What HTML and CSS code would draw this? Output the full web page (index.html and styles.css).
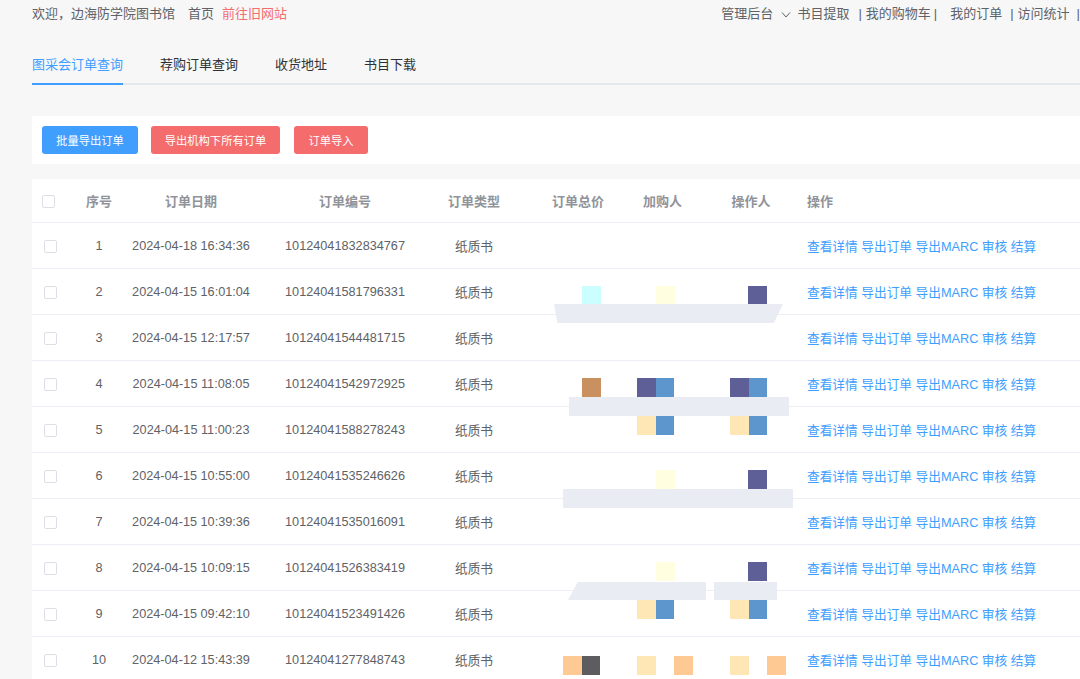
FILE: index.html
```html
<!DOCTYPE html>
<html lang="zh-CN">
<head>
<meta charset="utf-8">
<title>图采会订单查询</title>
<link rel="stylesheet" href="styles.css">
</head>
<body>
<div class="topbar">
  <div class="top-left">
    <span class="welcome">欢迎，边海防学院图书馆</span>
    <a class="home">首页</a>
    <a class="old">前往旧网站</a>
  </div>
  <div class="top-right">
    <span class="admin">管理后台</span>
    <svg class="chev" width="12" height="12" viewBox="0 0 12 12"><path d="M2 4.5 L6 9 L10 4.5" fill="none" stroke="#606266" stroke-width="1"/></svg>
    <span class="m5">书目提取</span>
    <span class="pipe m9">|</span>
    <span class="m4">我的购物车</span>
    <span class="pipe m3">|</span>
    <span class="m13">我的订单</span>
    <span class="pipe m8">|</span>
    <span class="m4">访问统计</span>
    <span class="pipe m7">|</span>
  </div>
</div>

<div class="tabs">
  <div class="tab active">图采会订单查询</div>
  <div class="tab">荐购订单查询</div>
  <div class="tab">收货地址</div>
  <div class="tab">书目下载</div>
</div>

<div class="toolbar">
  <button class="btn btn-blue w-batch">批量导出订单</button>
  <button class="btn btn-red w-all">导出机构下所有订单</button>
  <button class="btn btn-red w-import">订单导入</button>
</div>

<div class="table">
  <div class="row head">
    <div class="cell"><span class="cb cb-head"></span></div>
    <div class="cell">序号</div>
    <div class="cell">订单日期</div>
    <div class="cell">订单编号</div>
    <div class="cell">订单类型</div>
    <div class="cell"></div>
    <div class="cell">订单总价</div>
    <div class="cell">加购人</div>
    <div class="cell">操作人</div>
    <div class="cell ops">操作</div>
  </div>

  <div class="row">
    <div class="cell"><span class="cb"></span></div>
    <div class="cell">1</div>
    <div class="cell">2024-04-18 16:34:36</div>
    <div class="cell">10124041832834767</div>
    <div class="cell">纸质书</div>
    <div class="cell"></div>
    <div class="cell red"></div>
    <div class="cell red"></div>
    <div class="cell red"></div>
    <div class="cell ops"><a>查看详情</a> <a>导出订单</a> <a>导出MARC</a> <a>审核</a> <a>结算</a></div>
  </div>

  <div class="row">
    <div class="cell"><span class="cb"></span></div>
    <div class="cell">2</div>
    <div class="cell">2024-04-15 16:01:04</div>
    <div class="cell">10124041581796331</div>
    <div class="cell">纸质书</div>
    <div class="cell"></div>
    <div class="cell red o46"><i class="sq cyan"></i></div>
    <div class="cell red o36"><i class="sq lyel"></i></div>
    <div class="cell red o43"><i class="sq purple"></i></div>
    <div class="cell ops"><a>查看详情</a> <a>导出订单</a> <a>导出MARC</a> <a>审核</a> <a>结算</a></div>
  </div>

  <div class="row">
    <div class="cell"><span class="cb"></span></div>
    <div class="cell">3</div>
    <div class="cell">2024-04-15 12:17:57</div>
    <div class="cell">10124041544481715</div>
    <div class="cell">纸质书</div>
    <div class="cell"></div>
    <div class="cell red"></div>
    <div class="cell red"></div>
    <div class="cell red"></div>
    <div class="cell ops"><a>查看详情</a> <a>导出订单</a> <a>导出MARC</a> <a>审核</a> <a>结算</a></div>
  </div>

  <div class="row">
    <div class="cell"><span class="cb"></span></div>
    <div class="cell">4</div>
    <div class="cell">2024-04-15 11:08:05</div>
    <div class="cell">10124041542972925</div>
    <div class="cell">纸质书</div>
    <div class="cell"></div>
    <div class="cell red o46"><i class="sq brown"></i></div>
    <div class="cell red o17"><i class="sq purple"></i><i class="sq blue"></i></div>
    <div class="cell red o25"><i class="sq purple"></i><i class="sq blue"></i></div>
    <div class="cell ops"><a>查看详情</a> <a>导出订单</a> <a>导出MARC</a> <a>审核</a> <a>结算</a></div>
  </div>

  <div class="row">
    <div class="cell"><span class="cb"></span></div>
    <div class="cell">5</div>
    <div class="cell">2024-04-15 11:00:23</div>
    <div class="cell">10124041588278243</div>
    <div class="cell">纸质书</div>
    <div class="cell"></div>
    <div class="cell red hi"></div>
    <div class="cell red hi o17"><i class="sq pale"></i><i class="sq blue"></i></div>
    <div class="cell red hi o25"><i class="sq pale"></i><i class="sq blue"></i></div>
    <div class="cell ops"><a>查看详情</a> <a>导出订单</a> <a>导出MARC</a> <a>审核</a> <a>结算</a></div>
  </div>

  <div class="row">
    <div class="cell"><span class="cb"></span></div>
    <div class="cell">6</div>
    <div class="cell">2024-04-15 10:55:00</div>
    <div class="cell">10124041535246626</div>
    <div class="cell">纸质书</div>
    <div class="cell"></div>
    <div class="cell red"></div>
    <div class="cell red o36"><i class="sq lyel"></i></div>
    <div class="cell red o43"><i class="sq purple"></i></div>
    <div class="cell ops"><a>查看详情</a> <a>导出订单</a> <a>导出MARC</a> <a>审核</a> <a>结算</a></div>
  </div>

  <div class="row">
    <div class="cell"><span class="cb"></span></div>
    <div class="cell">7</div>
    <div class="cell">2024-04-15 10:39:36</div>
    <div class="cell">10124041535016091</div>
    <div class="cell">纸质书</div>
    <div class="cell"></div>
    <div class="cell red"></div>
    <div class="cell red"></div>
    <div class="cell red"></div>
    <div class="cell ops"><a>查看详情</a> <a>导出订单</a> <a>导出MARC</a> <a>审核</a> <a>结算</a></div>
  </div>

  <div class="row">
    <div class="cell"><span class="cb"></span></div>
    <div class="cell">8</div>
    <div class="cell">2024-04-15 10:09:15</div>
    <div class="cell">10124041526383419</div>
    <div class="cell">纸质书</div>
    <div class="cell"></div>
    <div class="cell red"></div>
    <div class="cell red o36"><i class="sq lyel"></i></div>
    <div class="cell red o43"><i class="sq purple"></i></div>
    <div class="cell ops"><a>查看详情</a> <a>导出订单</a> <a>导出MARC</a> <a>审核</a> <a>结算</a></div>
  </div>

  <div class="row">
    <div class="cell"><span class="cb"></span></div>
    <div class="cell">9</div>
    <div class="cell">2024-04-15 09:42:10</div>
    <div class="cell">10124041523491426</div>
    <div class="cell">纸质书</div>
    <div class="cell"></div>
    <div class="cell red hi"></div>
    <div class="cell red hi o17"><i class="sq pale"></i><i class="sq blue"></i></div>
    <div class="cell red hi o25"><i class="sq pale"></i><i class="sq blue"></i></div>
    <div class="cell ops"><a>查看详情</a> <a>导出订单</a> <a>导出MARC</a> <a>审核</a> <a>结算</a></div>
  </div>

  <div class="row">
    <div class="cell"><span class="cb"></span></div>
    <div class="cell">10</div>
    <div class="cell">2024-04-12 15:43:39</div>
    <div class="cell">10124041277848743</div>
    <div class="cell">纸质书</div>
    <div class="cell"></div>
    <div class="cell red lo o27"><i class="sq orange"></i><i class="sq dark"></i></div>
    <div class="cell red lo o17"><i class="sq pale"></i><i class="sq gap"></i><i class="sq orange"></i></div>
    <div class="cell red lo o25"><i class="sq pale"></i><i class="sq gap"></i><i class="sq orange"></i></div>
    <div class="cell ops"><a>查看详情</a> <a>导出订单</a> <a>导出MARC</a> <a>审核</a> <a>结算</a></div>
  </div>

  <div class="bar bar1"></div>
  <div class="bar bar2"></div>
  <div class="bar bar3"></div>
  <div class="bar bar4a"></div>
  <div class="bar bar4b"></div>
</div>
</body>
</html>
```

FILE: styles.css
```css
* { box-sizing: border-box; }

body {
  margin: 0;
  background: #f7f7f8;
  font-family: "Liberation Sans", "Noto Sans CJK SC", sans-serif;
  font-size: 13px;
  color: #606266;
  overflow: hidden;
}

a { cursor: pointer; }

/* top bar */
.topbar {
  display: flex;
  justify-content: space-between;
  height: 28px;
  line-height: 28px;
  padding-left: 32px;
  white-space: nowrap;
}
.top-left { display: flex; }
.welcome { margin-right: 13px; }
.home { margin-right: 8px; }
.old { color: #f56c6c; }

.top-right {
  display: flex;
  align-items: center;
}
.chev { margin-left: 7px; display: block; }
.pipe { color: #606266; }
.m3 { margin-left: 3px; }
.m4 { margin-left: 4px; }
.m5 { margin-left: 5px; }
.m7 { margin-left: 7px; }
.m8 { margin-left: 8px; }
.m9 { margin-left: 9px; }
.m13 { margin-left: 13px; }

/* tabs */
.tabs {
  display: flex;
  margin: 19px 0 0 32px;
  border-bottom: 2px solid #e4e7ed;
}
.tab {
  line-height: 36px;
  margin-right: 37px;
  color: #303133;
}
.tab.active {
  color: #409eff;
  border-bottom: 2px solid #409eff;
  margin-bottom: -2px;
}

/* toolbar */
.toolbar {
  display: flex;
  margin: 31px 0 0 32px;
  padding: 10px;
  background: #fff;
}
.btn {
  height: 28px;
  border: none;
  border-radius: 3px;
  color: #fff;
  font-family: inherit;
  font-size: 11.3px;
  padding: 0;
  margin-right: 13px;
}
.btn-blue { background: #409eff; }
.btn-red { background: #f56c6c; }
.w-batch { width: 96px; }
.w-all { width: 129px; margin-right: 14px; }
.w-import { width: 74px; }

/* table */
.table {
  position: relative;
  margin: 15px 0 0 32px;
  background: #fff;
  font-size: 12.7px;
}
.row {
  display: grid;
  grid-template-columns: 36px 62px 122px 186px 72px 26px 84px 85px 92px 1fr;
  align-items: center;
  height: 46px;
  border-bottom: 1px solid #ebeef5;
}
.row.head {
  height: 44px;
  font-size: 13px;
  font-weight: bold;
  color: #909399;
}
.cell {
  text-align: center;
  white-space: nowrap;
}
.cell.ops {
  text-align: left;
  padding-left: 10px;
}
.ops a { color: #409eff; }

.cb {
  display: inline-block;
  width: 13px;
  height: 13px;
  border: 1px solid #dcdfe6;
  border-radius: 2px;
  background: #fff;
  vertical-align: middle;
}
.cb-head { margin-right: 3px; }

/* redaction mosaic */
.cell.red {
  align-self: stretch;
  display: flex;
  align-items: flex-start;
  padding-top: 17px;
}
.cell.red.hi { padding-top: 9px; }
.cell.red.lo { padding-top: 19px; }
.o17 { padding-left: 17px; }
.o25 { padding-left: 25px; }
.o27 { padding-left: 27px; }
.o36 { padding-left: 36px; }
.o43 { padding-left: 43px; }
.o46 { padding-left: 46px; }

.sq {
  display: block;
  width: 18.5px;
  height: 18.5px;
  flex: none;
}
.cyan { background: #cbfeff; }
.lyel { background: #fffee0; }
.purple { background: #5f5f97; }
.blue { background: #5d96cd; }
.brown { background: #c99160; }
.pale { background: #fee6b5; }
.orange { background: #fec993; }
.dark { background: #5d5d60; }
.gap { background: transparent; }

.bar {
  position: absolute;
  background: #e9ecf3;
  height: 19px;
}
.bar1 {
  left: 522px; top: 125px; width: 229px;
  clip-path: polygon(0 0, 100% 0, 96% 100%, 1.5% 100%);
}
.bar2 { left: 537px; top: 218px; width: 220px; }
.bar3 { left: 531px; top: 310px; width: 230px; }
.bar4a {
  left: 536px; top: 403px; width: 138px; height: 18px;
  clip-path: polygon(7% 0, 100% 0, 100% 100%, 0 100%);
}
.bar4b { left: 682px; top: 403px; width: 63px; height: 18px; }
```
